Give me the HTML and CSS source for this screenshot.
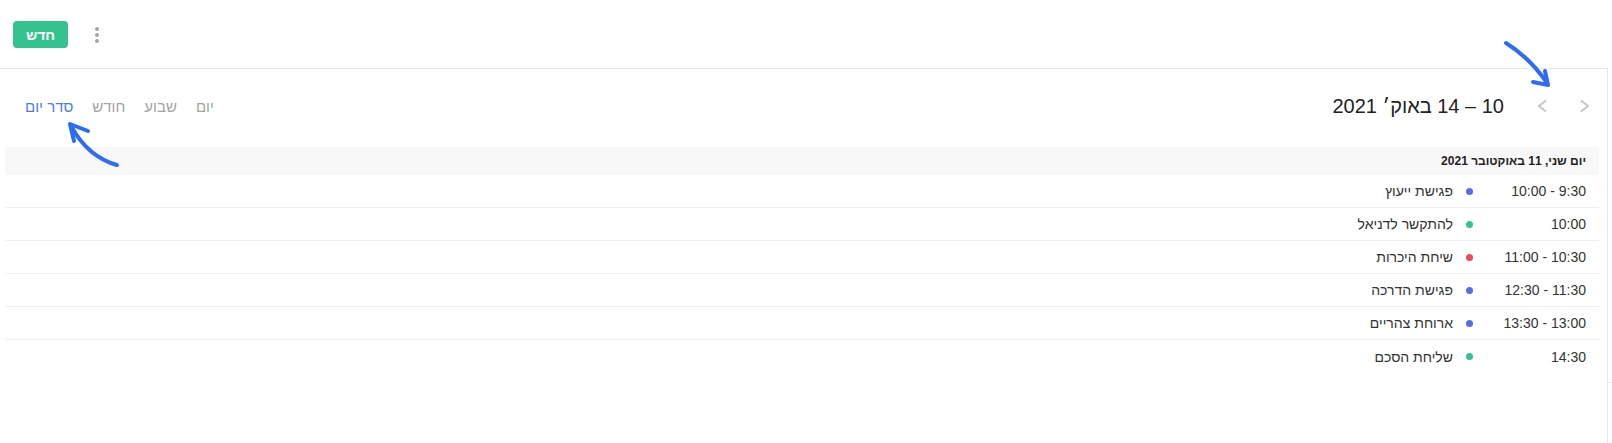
FILE: index.html
```html
<!DOCTYPE html>
<html lang="he" dir="rtl">
<head>
  <meta charset="UTF-8">
  <meta name="viewport" content="width=device-width, initial-scale=1">
  <title>יומן</title>
  <link rel="stylesheet" href="styles.css">
</head>
<body>
  <div class="topbar">
    <span class="kebab"><i></i><i></i><i></i></span>
    <button class="btn-new">חדש</button>
  </div>

  <div class="page">
    <div class="scroll-strip"><div class="scroll-mark"></div></div>

    <div class="calendar">
      <div class="cal-header">
        <div class="nav">
          <button class="chev" aria-label="הקודם">
            <svg width="11" height="14" viewBox="0 0 11 14"><polyline points="2,1.5 9,7 2,12.5" /></svg>
          </button>
          <button class="chev" aria-label="הבא">
            <svg width="11" height="14" viewBox="0 0 11 14"><polyline points="9,1.5 2,7 9,12.5" /></svg>
          </button>
          <h2 class="cal-title">10 – 14 באוק׳ 2021</h2>
        </div>
        <div class="views">
          <span class="view">יום</span>
          <span class="view">שבוע</span>
          <span class="view">חודש</span>
          <span class="view active">סדר יום</span>
        </div>
      </div>

      <div class="agenda">
        <div class="day-head">יום שני, 11 באוקטובר 2021</div>
        <div class="row"><span class="time">9:30 - 10:00</span><span class="dot blue"></span><span class="title">פגישת ייעוץ</span></div>
        <div class="row"><span class="time">10:00</span><span class="dot green"></span><span class="title">להתקשר לדניאל</span></div>
        <div class="row"><span class="time">10:30 - 11:00</span><span class="dot red"></span><span class="title">שיחת היכרות</span></div>
        <div class="row"><span class="time">11:30 - 12:30</span><span class="dot blue"></span><span class="title">פגישת הדרכה</span></div>
        <div class="row"><span class="time">13:00 - 13:30</span><span class="dot blue"></span><span class="title">ארוחת צהריים</span></div>
        <div class="row"><span class="time">14:30</span><span class="dot green"></span><span class="title">שליחת הסכם</span></div>
      </div>
    </div>
  </div>

  <!-- annotation arrows drawn over the page -->
  <svg class="marks" width="1612" height="443" viewBox="0 0 1612 443">
    <path d="M1506 43 Q1530 58 1547 83" />
    <path d="M1533 82 L1548 85 L1545 71" />
    <path d="M117 165 Q88 157 71 126" />
    <path d="M88 131 L70 124 L74 141" />
  </svg>
</body>
</html>
```

FILE: styles.css
```css
* {
  box-sizing: border-box;
  margin: 0;
  padding: 0;
}

html, body {
  height: 100%;
}

body {
  font-family: "Liberation Sans", Arial, sans-serif;
  color: #343a40;
  background: #fff;
  display: flex;
  flex-direction: column;
  position: relative;
  overflow: hidden;
}

/* top bar */
.topbar {
  height: 68px;
  display: flex;
  align-items: center;
  justify-content: flex-end;
  gap: 27px;
  padding-left: 13px;
}

.btn-new {
  width: 55px;
  height: 27px;
  margin-top: 1px;
  background: #34c38f;
  color: #fff;
  border: none;
  border-radius: 4px;
  font-family: inherit;
  font-size: 14px;
  font-weight: bold;
}

.kebab {
  display: flex;
  flex-direction: column;
  gap: 2px;
  margin-top: 1px;
}

.kebab i {
  width: 4px;
  height: 4px;
  border-radius: 50%;
  background: #a6a6ab;
}

/* main area */
.page {
  flex: 1;
  display: flex;
}

.scroll-strip {
  width: 4px;
}

.scroll-mark {
  margin-top: 314px;
  border-top: 1px solid #ececec;
}

.calendar {
  flex: 1;
  border-top: 1px solid #e6e6e6;
  border-right: 1px solid #e6e6e6;
}

.cal-header {
  height: 74px;
  display: flex;
  align-items: center;
  justify-content: space-between;
  padding-right: 17px;
  padding-left: 25px;
}

.nav {
  display: flex;
  align-items: center;
}

.chev {
  background: none;
  border: none;
  display: flex;
  margin-left: 31px;
}

.chev svg polyline {
  fill: none;
  stroke: #c6c6c6;
  stroke-width: 2;
}

.nav .chev:nth-child(2) {
  margin-left: 33px;
}

.cal-title {
  font-size: 20px;
  font-weight: normal;
  color: #222;
}

.views {
  display: flex;
  gap: 19px;
  font-size: 15px;
  color: #a3a3a3;
}

.view.active {
  color: #4a7cf0;
}

/* agenda list */
.agenda {
  margin: 4px 8px 0 5px;
  font-size: 14px;
}

.day-head {
  height: 28px;
  line-height: 28px;
  background: #f8f8f8;
  padding-right: 13px;
  font-size: 12px;
  font-weight: bold;
  color: #222;
}

.row {
  height: 33px;
  display: flex;
  align-items: center;
  padding-right: 13px;
  border-bottom: 1px solid #efefef;
  color: #333;
}

.row:last-child {
  border-bottom: none;
}

.time {
  width: 95px;
}

.dot {
  width: 7px;
  height: 7px;
  border-radius: 50%;
  margin-right: 18px;
  margin-left: 13px;
}

.dot.blue { background: #556ee6; }
.dot.green { background: #34c38f; }
.dot.red { background: #f1475d; }

/* annotation arrows */
.marks {
  position: absolute;
  top: 0;
  left: 0;
  pointer-events: none;
}

.marks path {
  fill: none;
  stroke: #2d6cf4;
  stroke-width: 4;
  stroke-linecap: round;
  stroke-linejoin: round;
}
```
